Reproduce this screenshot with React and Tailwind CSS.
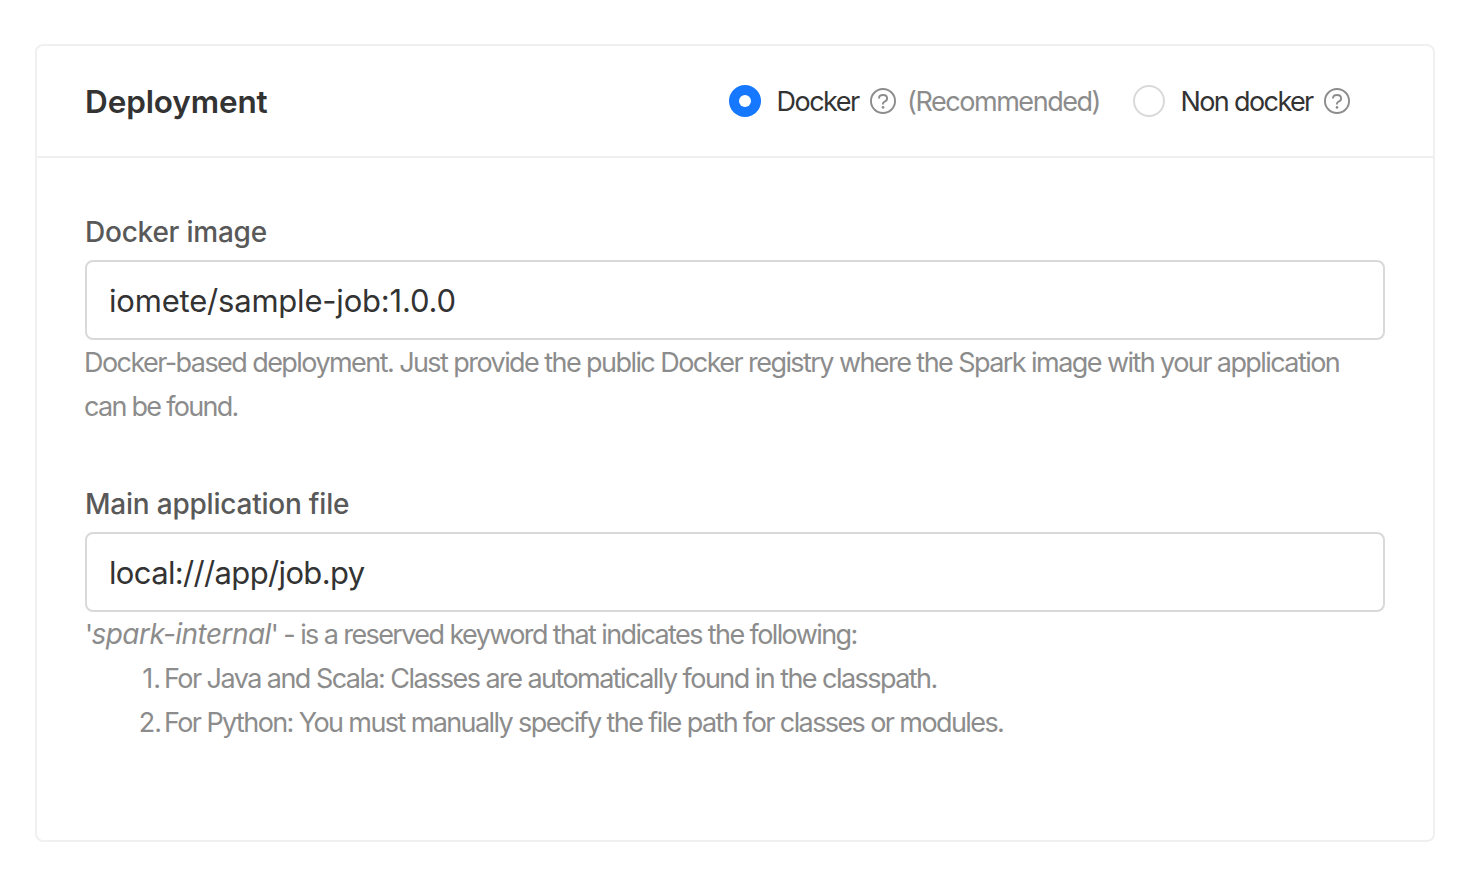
function HelpIcon() {
  return (
    <svg viewBox="0 0 26 26" className="h-[26px] w-[26px] shrink-0" fill="none" stroke="#8c8c8c">
      <circle cx="13" cy="13" r="12.05" strokeWidth="1.9" />
      <path d="M9 10.6V10.3C9 8.4 10.7 7 13 7S17.1 8.4 17.1 10.4C17.1 11.9 16 13 14.6 13.6C13.6 14 13 14.5 13 15.5V16.5" strokeWidth="1.9" />
      <circle cx="13" cy="19.4" r="1.3" fill="#8c8c8c" stroke="none" />
    </svg>
  );
}

function Radio({ checked }) {
  return checked ? (
    <span className="flex h-8 w-8 shrink-0 items-center justify-center rounded-full bg-[#1677ff]">
      <span className="h-3 w-3 rounded-full bg-white" />
    </span>
  ) : (
    <span className="h-8 w-8 shrink-0 rounded-full border-2 border-[#d9d9d9] bg-white" />
  );
}

function Field({ label, labelClass, value, valueClass, children }) {
  return (
    <div>
      <label className={"block h-[50px] text-[28px] leading-[44px] font-medium text-[#595959] " + labelClass}>{label}</label>
      <div className={"flex h-20 items-center rounded-lg border-2 border-[#d9d9d9] bg-white px-[22px] pt-0.5 text-[31px] text-[#333333] " + valueClass}>
        {value}
      </div>
      <div className="h-[88px] pt-px text-[27px] leading-[44px] tracking-[-1.57px] whitespace-nowrap text-[#8c8c8c]">{children}</div>
    </div>
  );
}

export default function App() {
  return (
    <div className="h-[876px] w-[1480px] bg-white pt-[44px] pl-[35px] font-['Inter','Noto_Sans',sans-serif]">
      <section className="flex h-[798px] w-[1400px] flex-col rounded-lg border-2 border-[#f0f0f0]">
        <header className="flex h-28 items-center border-b-2 border-[#f0f0f0] pl-12">
          <h2 className="w-[644px] pt-0.5 text-[31.5px] font-semibold tracking-[-0.12px] text-[#333333]">Deployment</h2>
          <div className="flex w-[404px] items-center">
            <Radio checked />
            <span className="w-[109px] pt-0.5 pl-[15.5px] text-[27px] tracking-[-1.5px] text-[#333333]">Docker</span>
            <HelpIcon />
            <span className="pt-0.5 pl-[11px] text-[27px] tracking-[-1.45px] text-[#8c8c8c]">(Recommended)</span>
          </div>
          <div className="flex items-center">
            <Radio />
            <span className="w-[159px] pt-0.5 pl-[15.5px] text-[27px] tracking-[-1.62px] text-[#333333]">Non docker</span>
            <HelpIcon />
          </div>
        </header>
        <div className="flex flex-col gap-[54px] px-12 pt-[52px]">
          <Field
            label="Docker image"
            labelClass="tracking-[-0.23px]"
            value="iomete/sample-job:1.0.0"
            valueClass="tracking-[-0.2px]"
          >
            <p className="-ml-px">Docker-based deployment. Just provide the public Docker registry where the Spark image with your application</p>
            <p className="-ml-px tracking-[-1.72px]">can be found.</p>
          </Field>
          <Field
            label="Main application file"
            labelClass="tracking-[-0.22px]"
            value="local:///app/job.py"
            valueClass="tracking-[-0.65px]"
          >
            <p className="h-11 tracking-[-1.6px]">
              '<em className="text-[28px] leading-none tracking-[-0.55px]">spark-internal</em>' - is a reserved keyword that indicates the following:
            </p>
            <ol>
              <li className="flex">
                <span className="w-[79px] pr-[3px] text-right tracking-normal">1.</span>
                <span className="tracking-[-1.55px]">For Java and Scala: Classes are automatically found in the classpath.</span>
              </li>
              <li className="flex">
                <span className="w-[79px] pr-[3px] text-right tracking-[-1px]">2.</span>
                <span className="tracking-[-1.6px]">For Python: You must manually specify the file path for classes or modules.</span>
              </li>
            </ol>
          </Field>
        </div>
      </section>
    </div>
  );
}
